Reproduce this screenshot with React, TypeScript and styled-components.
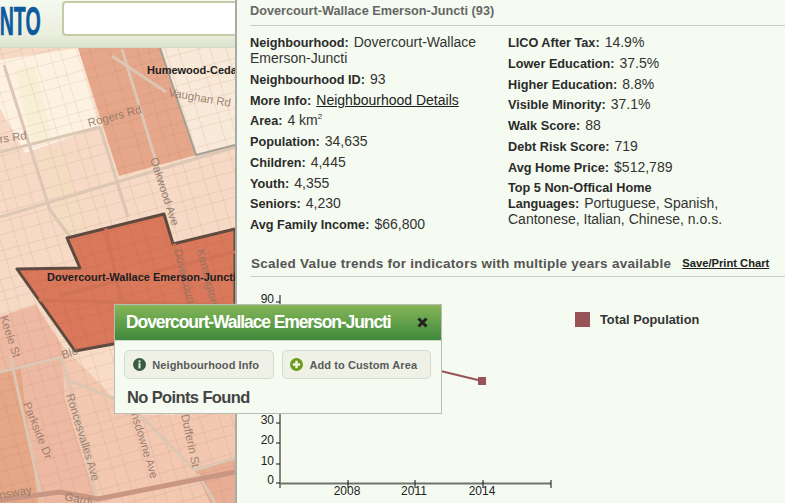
import React, { FC } from 'react';
import styled, { createGlobalStyle } from 'styled-components';

const GlobalStyle = createGlobalStyle`
  html, body {
    margin: 0;
    padding: 0;
    background: #f5fbf0;
    font-family: "Liberation Sans", Arial, sans-serif;
  }
`;

type Stat = { label: string; value?: string; link?: boolean; sup?: string };

const leftStats: Stat[] = [
  { label: 'Neighbourhood:', value: 'Dovercourt-Wallace Emerson-Juncti' },
  { label: 'Neighbourhood ID:', value: '93' },
  { label: 'More Info:', value: 'Neighbourhood Details', link: true },
  { label: 'Area:', value: '4 km', sup: '2' },
  { label: 'Population:', value: '34,635' },
  { label: 'Children:', value: '4,445' },
  { label: 'Youth:', value: '4,355' },
  { label: 'Seniors:', value: '4,230' },
  { label: 'Avg Family Income:', value: '$66,800' },
];

const rightStats: Stat[] = [
  { label: 'LICO After Tax:', value: '14.9%' },
  { label: 'Lower Education:', value: '37.5%' },
  { label: 'Higher Education:', value: '8.8%' },
  { label: 'Visible Minority:', value: '37.1%' },
  { label: 'Walk Score:', value: '88' },
  { label: 'Debt Risk Score:', value: '719' },
  { label: 'Avg Home Price:', value: '$512,789' },
  { label: 'Top 5 Non-Offical Home Languages:', value: 'Portuguese, Spanish, Cantonese, Italian, Chinese, n.o.s.' },
];

const roadLabels = [
  { text: 'Rogers Rd', x: 89, y: 127, r: -15 },
  { text: 'rs Rd', x: 0, y: 143, r: -8 },
  { text: 'Vaughan Rd', x: 168, y: 96, r: 10 },
  { text: 'Oakwood Ave', x: 150, y: 159, r: 72 },
  { text: 'Keele St', x: 0, y: 317, r: 72 },
  { text: 'Parkside Dr', x: 23, y: 404, r: 68 },
  { text: 'Roncesvalles Ave', x: 66, y: 395, r: 73 },
  { text: 'nsdowne Ave', x: 131, y: 414, r: 73 },
  { text: 'Dufferin St', x: 181, y: 415, r: 78 },
  { text: 'Blo', x: 63, y: 359, r: -18 },
  { text: 'nsway', x: 0, y: 499, r: -10 },
  { text: 'Gardi', x: 64, y: 500, r: 12 },
  { text: 'Dovercourt Rd', x: 174, y: 250, r: 76 },
  { text: 'Kensington Ave', x: 197, y: 250, r: 76 },
];

const majorRoads = [
  '0,152 100,127',
  '0,217 235,147',
  '100,127 128,217',
  '122,49 157,165 175,226',
  '4,65 50,210 76,245',
  '112,56 166,92',
  '0,372 62,357',
  '10,355 42,500',
  '62,357 98,503',
  '68,380 130,405 195,470',
  '195,470 235,458',
  '198,474 215,503',
];

const selectedRoads = ['105,225 130,345', '170,225 195,335', '60,295 235,252', '30,300 235,305'];

// street blocks are not evenly sized, so the grid steps through a short pattern
const stepLines = (start: number, count: number, pattern: number[]) => {
  const lines: number[] = [];
  let at = start;
  for (let i = 0; i < count; i++) {
    lines.push(at);
    at += pattern[i % pattern.length];
  }
  return lines;
};

const nsLines = stepLines(-130, 30, [11, 17, 13, 20, 12, 16]);
const ewLines = stepLines(55, 44, [9, 13, 16, 10, 19, 12]);

const Page = styled.div`
  position: relative;
  display: flex;
  width: 785px;
  height: 503px;
  overflow: hidden;
  background: #f5fbf0;
`;

const MapColumn = styled.div`
  display: flex;
  flex-direction: column;
  flex: 0 0 235px;
  width: 235px;
  overflow: hidden;
`;

const TopBar = styled.header`
  display: flex;
  flex: 0 0 48px;
  box-sizing: border-box;
  height: 48px;
  padding-top: 1px;
  gap: 21px;
  background: linear-gradient(#f5faf0, #e9eedd 75%, #dde2cf);
  border-bottom: 1px solid #d2d6c2;
`;

const Logo = styled.div`
  position: relative;
  width: 41px;
  height: 37px;
  overflow: hidden;
`;

const LogoText = styled.span`
  position: absolute;
  right: 0;
  top: 0;
  font-size: 40px;
  line-height: 41px;
  font-weight: 700;
  color: #0d5a9f;
  -webkit-text-stroke: 0.6px #0d5a9f;
  transform: scaleX(0.49);
  transform-origin: right center;
`;

const SearchBox = styled.div`
  flex: 1;
  height: 35px;
  box-sizing: border-box;
  background: #fff;
  border: 2px solid #c6caa8;
  border-right: 0;
  border-radius: 4px 0 0 4px;
`;

const MapCanvas = styled.svg`
  display: block;
  flex: 1;
  width: 235px;
`;

const RoadLabel = styled.text`
  font-family: "Liberation Sans", Arial, sans-serif;
  font-size: 11.5px;
  fill: #8c7264;
  fill-opacity: 0.85;
`;

const AreaLabel = styled.text`
  font-family: "Liberation Sans", Arial, sans-serif;
  font-size: 11px;
  font-weight: 700;
  fill: #1d1d22;
`;

const Panel = styled.main`
  flex: 1;
  box-sizing: border-box;
  padding: 0 0 0 13px;
  border-left: 2px solid #a9aca6;
  color: #333;
`;

const PanelTitle = styled.h2`
  margin: 0 0 8px;
  height: 26px;
  box-sizing: border-box;
  padding-top: 3px;
  border-bottom: 1px solid #c8ccc6;
  font-size: 12.7px;
  line-height: 16px;
  font-weight: 700;
  color: #666;
`;

const StatsGrid = styled.div`
  display: grid;
  grid-template-columns: 258px 232px;
  height: 216px;
`;

const StatColumn = styled.div`
  display: flex;
  flex-direction: column;
  gap: 4.75px;
`;

const StatRow = styled.div`
  font-size: 14px;
  line-height: 16px;
  color: #333;
`;

const StatLabel = styled.b`
  font-size: 12.7px;
  line-height: 1;
  color: #2b2b2b;
  margin-right: 5px;
`;

const StatLink = styled.a`
  color: #222;
  text-decoration: underline;
`;

const Sup = styled.sup`
  font-size: 8px;
  line-height: 0;
`;

const ChartHeader = styled.div`
  display: flex;
  align-items: center;
  gap: 11px;
  height: 27px;
  box-sizing: border-box;
  padding-left: 1px;
  border-bottom: 1px solid #c8ccc6;
`;

const ChartTitle = styled.h3`
  margin: 0;
  font-size: 13.5px;
  font-weight: 700;
  letter-spacing: 0.26px;
  color: #555;
`;

const SaveLink = styled.a`
  font-size: 11.2px;
  font-weight: 700;
  color: #222;
  text-decoration: underline;
`;

const ChartArea = styled.section`
  display: flex;
  height: 225px;
`;

const ChartCanvas = styled.svg`
  display: block;
  flex: 0 0 320px;
  width: 320px;
  height: 225px;
`;

const ChartTick = styled.text`
  font-family: "Liberation Sans", Arial, sans-serif;
  font-size: 12px;
  fill: #222;
`;

const Legend = styled.div`
  display: flex;
  align-items: center;
  gap: 10px;
  height: 16px;
  margin: 34px 0 0 5px;
  font-size: 12.8px;
  font-weight: 700;
  color: #333;
`;

const LegendSwatch = styled.span`
  width: 15px;
  height: 15px;
  background: #985357;
`;

const Popup = styled.aside`
  position: absolute;
  left: 114px;
  top: 304px;
  width: 328px;
  height: 110px;
  box-sizing: border-box;
  background: #f5fbf0;
  border: 1px solid #b9bcb5;
`;

const PopupHeader = styled.div`
  display: flex;
  align-items: center;
  justify-content: space-between;
  height: 35px;
  padding: 0 13px 0 11px;
  background: linear-gradient(#86b657, #3f8a3c);
  border-bottom: 1px solid #cfd6c6;
`;

const PopupTitle = styled.span`
  font-size: 17.5px;
  font-weight: 700;
  letter-spacing: -1.1px;
  color: #fff;
`;

const PopupBody = styled.div`
  padding: 9px 10px 0 9px;
`;

const ButtonRow = styled.div`
  display: flex;
  gap: 8px;
`;

const PopupButton = styled.button`
  display: flex;
  align-items: center;
  justify-content: center;
  gap: 6px;
  flex: 1;
  height: 29px;
  padding: 0 5px 0 0;
  box-sizing: border-box;
  background: #eff1e6;
  border: 1px solid #d6d9ce;
  border-radius: 5px;
  font-family: "Liberation Sans", Arial, sans-serif;
  font-size: 11px;
  font-weight: 700;
  letter-spacing: 0.1px;
  color: #5a5a5a;
`;

const NoPoints = styled.p`
  margin: 9px 0 0 3px;
  font-size: 16.5px;
  line-height: 19px;
  font-weight: 700;
  letter-spacing: -0.62px;
  color: #444;
`;

const InfoIcon: FC = () => (
  <svg width="13" height="13" viewBox="0 0 13 13">
    <circle cx="6.5" cy="6.5" r="6.5" fill="#3a5c40" />
    <rect x="5.5" y="2.4" width="2" height="2" fill="#e8efe4" />
    <rect x="5.5" y="5.2" width="2" height="5.2" fill="#e8efe4" />
  </svg>
);

const PlusIcon: FC = () => (
  <svg width="13" height="13" viewBox="0 0 13 13">
    <circle cx="6.5" cy="6.5" r="6.5" fill="#6b9a1a" />
    <path d="M5.3 2.8h2.4v2.5h2.5v2.4H7.7v2.5H5.3V7.7H2.8V5.3h2.5z" fill="#f2f6e6" />
  </svg>
);

const CloseGlyph: FC = () => (
  <svg width="11" height="11" viewBox="0 0 11 11">
    <path d="M1.5 1.5l8 8M9.5 1.5l-8 8" stroke="#222" strokeWidth="3" />
  </svg>
);

const selectedArea = '67,238 164,214 173,244 235,229 235,322 75,351 17,269 80,268';

const MapDrawing: FC = () => (
  <MapCanvas viewBox="0 48 235 455" height="455">
    <defs>
      <clipPath id="selected-area">
        <polygon points={selectedArea} />
      </clipPath>
    </defs>
    <rect x="0" y="48" width="235" height="455" fill="#f6dac6" />
    <polygon points="0,60 78,48 100,127 25,153 0,108" fill="#fdf2e2" />
    <polygon points="15,70 35,66 52,138 32,143" fill="#f8f0d6" />
    <polygon points="160,48 235,48 235,146 196,155" fill="#f9e9d8" />
    <polygon points="40,152 62,148 85,230 65,238" fill="#f3dcc0" />
    <polygon points="78,48 160,48 196,155 119,176" fill="#e5a68a" />
    <polygon points="0,316 36,305 62,345 65,400 98,503 0,503" fill="#eeb9a3" />
    <polygon points="62,345 115,345 235,330 235,503 98,503 65,400" fill="#f2c8b0" />
    <polygon points="62,345 115,345 175,415 130,415" fill="#f8dcc6" />
    <polygon points="0,372 20,365 38,503 0,503" fill="#e5a785" />
    <polygon points="195,470 235,458 235,503 210,503" fill="#e8ad95" />
    <g stroke="#a9785c" strokeOpacity="0.17" strokeWidth="0.8">
      {nsLines.map((x0) => (
        <line key={x0} x1={x0} y1="48" x2={x0 + 136} y2="503" />
      ))}
      {ewLines.map((y0) => (
        <line key={y0} x1="0" y1={y0} x2="235" y2={y0 - 64} />
      ))}
    </g>
    <g fill="none" stroke="#dcc6b4" strokeWidth="3">
      {majorRoads.map((points) => (
        <polyline key={points} points={points} />
      ))}
    </g>
    <polyline points="0,500 60,492 98,499 235,472" fill="none" stroke="#c99683" strokeWidth="5" />
    <polyline points="160,48 196,155 235,145" fill="none" stroke="#a3a096" strokeWidth="2" />
    <polygon points={selectedArea} fill="#d9785a" stroke="#5d4a40" strokeWidth="3" strokeLinejoin="round" />
    <g clipPath="url(#selected-area)">
      <g stroke="#b5603f" strokeOpacity="0.22" strokeWidth="0.8">
        {nsLines.map((x0) => (
          <line key={x0} x1={x0} y1="48" x2={x0 + 136} y2="503" />
        ))}
        {ewLines.map((y0) => (
          <line key={y0} x1="0" y1={y0} x2="235" y2={y0 - 64} />
        ))}
      </g>
      <g fill="none" stroke="#cf7355" strokeWidth="3">
        {selectedRoads.map((points) => (
          <polyline key={points} points={points} />
        ))}
      </g>
    </g>
    {roadLabels.map((label) => (
      <RoadLabel
        key={label.text}
        x={label.x}
        y={label.y}
        transform={`rotate(${label.r} ${label.x} ${label.y})`}
      >
        {label.text}
      </RoadLabel>
    ))}
    <AreaLabel x="147" y="74">Humewood-Cedarvale</AreaLabel>
    <AreaLabel x="47" y="281">Dovercourt-Wallace Emerson-Junction</AreaLabel>
  </MapCanvas>
);

const yTicks = [
  { label: '90', y: 303 },
  { label: '30', y: 424 },
  { label: '20', y: 444 },
  { label: '10', y: 465 },
  { label: '0', y: 484 },
];

const xTicks = [
  { label: '2008', x: 348 },
  { label: '2011', x: 415 },
  { label: '2014', x: 483 },
];

const TrendChart: FC = () => (
  <ChartCanvas viewBox="250 278 320 225">
    <line x1="280" y1="296" x2="280" y2="489" stroke="#111" />
    <line x1="280" y1="484.5" x2="551" y2="484.5" stroke="#6f736c" strokeWidth="2" />
    {yTicks.map((t) => (
      <g key={t.label}>
        <line x1="276" y1={t.y} x2="280" y2={t.y} stroke="#111" />
        <ChartTick x="274" y={t.y + 1} textAnchor="end">{t.label}</ChartTick>
      </g>
    ))}
    {xTicks.map((t) => (
      <g key={t.label}>
        <line x1={t.x} y1="481" x2={t.x} y2="489" stroke="#111" />
        <ChartTick x={t.x - 1} y="496" textAnchor="middle">{t.label}</ChartTick>
      </g>
    ))}
    <line x1="551" y1="481" x2="551" y2="489" stroke="#111" />
    <line x1="300" y1="338" x2="482" y2="382" stroke="#985357" strokeWidth="2" />
    <rect x="478" y="378" width="8" height="8" fill="#985357" />
  </ChartCanvas>
);

const StatList: FC<{ stats: Stat[] }> = ({ stats }) => (
  <StatColumn>
    {stats.map((s) => (
      <StatRow key={s.label}>
        <StatLabel>{s.label}</StatLabel>
        {s.link ? <StatLink>{s.value}</StatLink> : s.value}
        {s.sup && <Sup>{s.sup}</Sup>}
      </StatRow>
    ))}
  </StatColumn>
);

export default function App() {
  return (
    <Page>
      <GlobalStyle />
      <MapColumn>
        <TopBar>
          <Logo>
            <LogoText>NTO</LogoText>
          </Logo>
          <SearchBox />
        </TopBar>
        <MapDrawing />
      </MapColumn>
      <Panel>
        <PanelTitle>Dovercourt-Wallace Emerson-Juncti (93)</PanelTitle>
        <StatsGrid>
          <StatList stats={leftStats} />
          <StatList stats={rightStats} />
        </StatsGrid>
        <ChartHeader>
          <ChartTitle>Scaled Value trends for indicators with multiple years available</ChartTitle>
          <SaveLink>Save/Print Chart</SaveLink>
        </ChartHeader>
        <ChartArea>
          <TrendChart />
          <Legend>
            <LegendSwatch />
            Total Population
          </Legend>
        </ChartArea>
      </Panel>
      <Popup>
        <PopupHeader>
          <PopupTitle>Dovercourt-Wallace Emerson-Juncti</PopupTitle>
          <CloseGlyph />
        </PopupHeader>
        <PopupBody>
          <ButtonRow>
            <PopupButton><InfoIcon />Neighbourhood Info</PopupButton>
            <PopupButton><PlusIcon />Add to Custom Area</PopupButton>
          </ButtonRow>
          <NoPoints>No Points Found</NoPoints>
        </PopupBody>
      </Popup>
    </Page>
  );
}
